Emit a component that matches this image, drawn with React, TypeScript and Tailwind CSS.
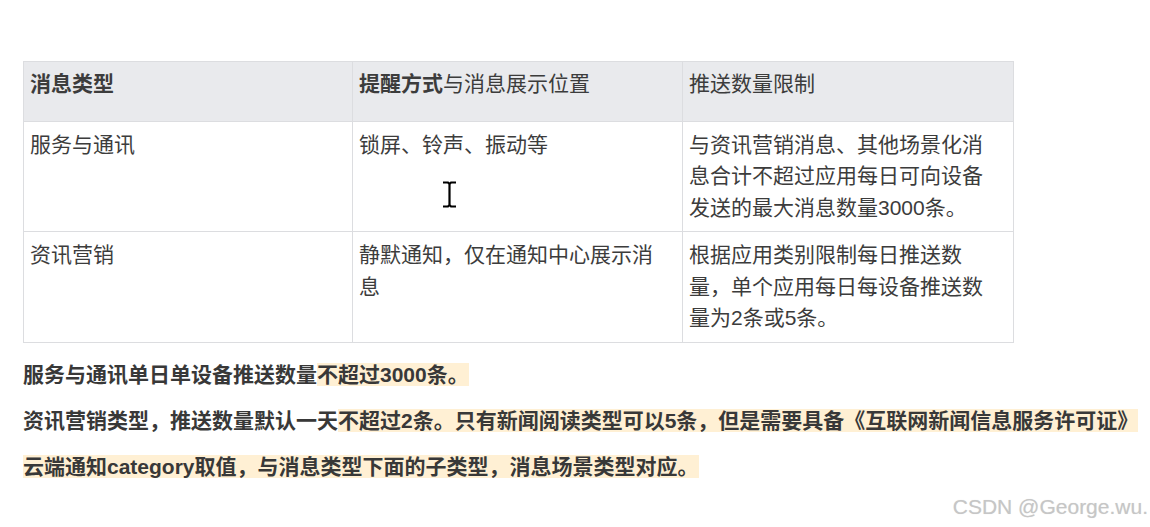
const font = { fontFamily: '"Liberation Sans", "Noto Sans CJK SC", sans-serif' };

type Row = { type: string; remind: string; limit: string };

const rows: Row[] = [
  {
    type: '服务与通讯',
    remind: '锁屏、铃声、振动等',
    limit: '与资讯营销消息、其他场景化消息合计不超过应用每日可向设备发送的最大消息数量3000条。',
  },
  {
    type: '资讯营销',
    remind: '静默通知，仅在通知中心展示消息',
    limit: '根据应用类别限制每日推送数量，单个应用每日每设备推送数量为2条或5条。',
  },
];

const Mark = ({ children }: { children: React.ReactNode }) => (
  <span className="bg-[#fff0d4]">{children}</span>
);

const IBeam = () => (
  <svg
    className="absolute left-[442px] top-[181px]"
    width="15"
    height="27"
    viewBox="0 0 15 27"
  >
    <path d="M1 1.5h5l1.5 1.5 1.5-1.5h5M7.5 2.5v22M1 25.5h5l1.5-1.5 1.5 1.5h5" stroke="#000" strokeWidth="2.2" fill="none" />
  </svg>
);

export default function App() {
  return (
    <div className="relative h-[527px] w-[1150px] overflow-hidden bg-white text-[#3c3c3c]" style={font}>
      <div className="pl-[23px] pt-[61px]">
        {/* Table */}
        <table className="w-[990px] table-fixed border-collapse text-[21px] leading-[31.5px]">
          <colgroup>
            <col className="w-[329px]" />
            <col className="w-[330px]" />
            <col className="w-[331px]" />
          </colgroup>
          <thead>
            <tr className="bg-[#e9eaed]">
              <th className="border border-[#dcdde0] pb-[21px] pl-[6px] pr-[12px] pt-[6px] text-left align-top font-bold">
                消息类型
              </th>
              <th className="border border-[#dcdde0] pb-[21px] pl-[6px] pr-[12px] pt-[6px] text-left align-top font-normal">
                <b>提醒方式</b>与消息展示位置
              </th>
              <th className="border border-[#dcdde0] pb-[21px] pl-[6px] pr-[12px] pt-[6px] text-left align-top font-normal">
                推送数量限制
              </th>
            </tr>
          </thead>
          <tbody>
            {rows.map((r) => (
              <tr key={r.type}>
                <td className="border border-[#dcdde0] pb-[8px] pl-[6px] pr-[12px] pt-[7px] align-top">{r.type}</td>
                <td className="border border-[#dcdde0] pb-[8px] pl-[6px] pr-[12px] pt-[7px] align-top">{r.remind}</td>
                <td className="border border-[#dcdde0] pb-[8px] pl-[6px] pr-[12px] pt-[7px] align-top">{r.limit}</td>
              </tr>
            ))}
          </tbody>
        </table>

        {/* Notes */}
        <div className="mt-[17px] flex flex-col gap-[16px] text-[21px] font-bold leading-[30px] text-[#383838]">
          <p>
            服务与通讯单日单设备推送数量<Mark>不超过3000条。</Mark>
          </p>
          <p>
            资讯营销类型，推送数量默认一天<Mark>不超过2条。只有新闻阅读类型可以5条，但是需要具备《互联网新闻信息服务许可证》</Mark>
          </p>
          <p>
            <Mark>云端通知category取值，与消息类型下面的子类型，消息场景类型对应。</Mark>
          </p>
        </div>
      </div>

      <IBeam />

      {/* Watermark */}
      <div className="absolute right-[2px] top-[493px] text-[21px] leading-[28px] text-[#c6c6c6] [text-shadow:0_0_1px_#e0e0e0]">
        CSDN @George.wu.
      </div>
    </div>
  );
}
